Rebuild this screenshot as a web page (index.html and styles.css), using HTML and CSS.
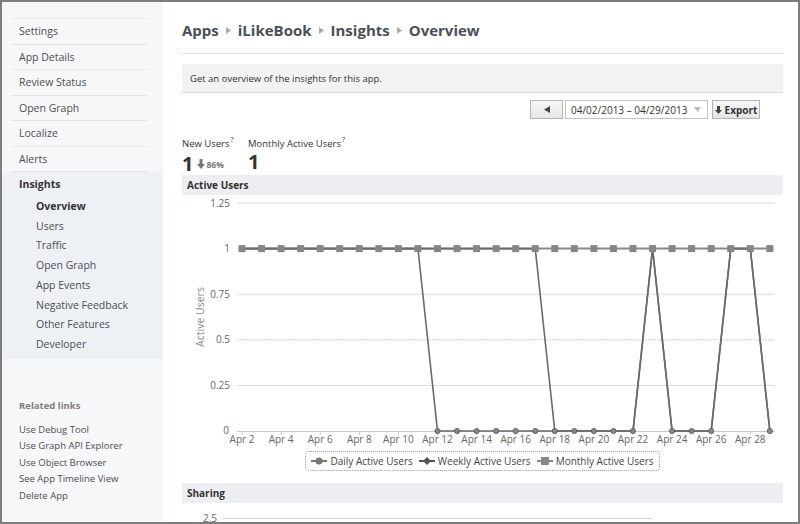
FILE: index.html
```html
<!DOCTYPE html>
<html>
<head>
<meta charset="utf-8">
<link rel="stylesheet" href="styles.css">
</head>
<body>
<div class="frame">
  <aside class="sidebar">
    <ul class="nav">
      <li>Settings</li>
      <li>App Details</li>
      <li>Review Status</li>
      <li>Open Graph</li>
      <li>Localize</li>
      <li>Alerts</li>
    </ul>
    <div class="insights">
      <div class="ins-title">Insights</div>
      <ul class="sub">
        <li class="active">Overview</li>
        <li>Users</li>
        <li>Traffic</li>
        <li>Open Graph</li>
        <li>App Events</li>
        <li>Negative Feedback</li>
        <li>Other Features</li>
        <li>Developer</li>
      </ul>
    </div>
    <div class="related">
      <div class="rel-title">Related links</div>
      <ul class="rel-list">
        <li>Use Debug Tool</li>
        <li>Use Graph API Explorer</li>
        <li>Use Object Browser</li>
        <li>See App Timeline View</li>
        <li>Delete App</li>
      </ul>
    </div>
  </aside>
  <main class="main">
    <h1 class="crumbs">Apps<svg class="sep" width="5" height="7" viewBox="0 0 5 7"><path d="M0 0 L5 3.5 L0 7Z"/></svg>iLikeBook<svg class="sep" width="5" height="7" viewBox="0 0 5 7"><path d="M0 0 L5 3.5 L0 7Z"/></svg>Insights<svg class="sep" width="5" height="7" viewBox="0 0 5 7"><path d="M0 0 L5 3.5 L0 7Z"/></svg>Overview</h1>
    <div class="desc">Get an overview of the insights for this app.</div>
    <div class="controls">
      <div class="btn prev"><svg width="6" height="7" viewBox="0 0 6 7"><path d="M6 0 L0 3.5 L6 7Z"/></svg></div>
      <div class="select"><span>04/02/2013 – 04/29/2013</span><svg class="caret" width="7" height="5" viewBox="0 0 7 5"><path d="M0 0 L7 0 L3.5 5Z"/></svg></div>
      <div class="btn export"><svg width="7" height="8" viewBox="0 0 7 8"><path d="M2 0 H5 V4 H7 L3.5 8 L0 4 H2Z"/></svg>Export</div>
    </div>
    <div class="stats">
      <div class="stat s1">
        <div class="stat-label">New Users<sup>?</sup></div>
        <div class="stat-val">1<svg class="down" width="8" height="10" viewBox="0 0 8 10"><path d="M2.5 0 H5.5 V5 H8 L4 10 L0 5 H2.5Z"/></svg><span class="pct">86%</span></div>
      </div>
      <div class="stat">
        <div class="stat-label">Monthly Active Users<sup>?</sup></div>
        <div class="stat-val">1</div>
      </div>
    </div>
    <div class="bar">Active Users</div>
    <svg class="chart" width="601" height="252" viewBox="0 0 601 252">
      <g class="grid">
        <line x1="55" y1="8" x2="593" y2="8"/>
        <line x1="55" y1="53.6" x2="593" y2="53.6"/>
        <line class="dash" x1="55" y1="99.2" x2="593" y2="99.2"/>
        <line class="dash" x1="55" y1="144.8" x2="593" y2="144.8"/>
        <line x1="55" y1="190.4" x2="593" y2="190.4"/>
        <line class="axis" x1="55" y1="236.5" x2="593" y2="236.5"/>
      </g>
      <g class="ylab">
        <text x="48" y="12">1.25</text>
        <text x="48" y="57">1</text>
        <text x="48" y="103">0.75</text>
        <text x="48" y="148">0.5</text>
        <text x="48" y="194">0.25</text>
        <text x="47" y="239">0</text>
      </g>
      <text class="ytitle" transform="translate(22 122) rotate(-90)">Active Users</text>
      <g class="xlab" id="xlab"></g>
      <g id="series"></g>
    </svg>
    <div class="legend-wrap">
      <div class="legend">
        <span class="li"><svg width="16" height="10" viewBox="0 0 16 10"><line x1="0" y1="5" x2="16" y2="5" stroke="#777" stroke-width="2"/><circle cx="8" cy="5" r="3.5" fill="#777"/></svg>Daily Active Users</span>
        <span class="li"><svg width="16" height="10" viewBox="0 0 16 10"><line x1="0" y1="5" x2="16" y2="5" stroke="#555" stroke-width="2"/><path d="M8 1 L12 5 L8 9 L4 5Z" fill="#555"/></svg>Weekly Active Users</span>
        <span class="li"><svg width="16" height="10" viewBox="0 0 16 10"><line x1="0" y1="5" x2="16" y2="5" stroke="#888" stroke-width="2"/><rect x="4" y="1" width="8" height="8" fill="#888"/></svg>Monthly Active Users</span>
      </div>
    </div>
    <div class="bar">Sharing</div>
    <div class="share-axis"><span>2.5</span><i class="share-line"></i></div>
  </main>
</div>
<script src="chart.js"></script>
</body>
</html>
```

FILE: chart.js
```js
(function () {
  var NS = 'http://www.w3.org/2000/svg';
  var X = function (i) { return 60 + 19.55 * i; };
  var Y = function (v) { return 236 - v * 182.4; };
  var xl = document.getElementById('xlab');
  for (var d = 2; d <= 28; d += 2) {
    var t = document.createElementNS(NS, 'text');
    t.setAttribute('x', X(d - 2));
    t.setAttribute('y', 248);
    t.textContent = 'Apr ' + d;
    xl.appendChild(t);
    var tk = document.createElementNS(NS, 'line');
    tk.setAttribute('x1', X(d - 2)); tk.setAttribute('x2', X(d - 2));
    tk.setAttribute('y1', 237); tk.setAttribute('y2', 240);
    tk.setAttribute('class', 'tick');
    xl.appendChild(tk);
  }
  function vals(spec) {
    var a = [];
    for (var i = 0; i < 28; i++) a.push(spec(i));
    return a;
  }
  var daily = vals(function (i) {
    if (i <= 9) return 1;
    if (i <= 20) return 0;
    if (i === 21) return 1;
    if (i <= 24) return 0;
    if (i <= 26) return 1;
    return 0;
  });
  var weekly = vals(function (i) {
    if (i <= 15) return 1;
    if (i <= 20) return 0;
    if (i === 21) return 1;
    if (i <= 24) return 0;
    if (i <= 26) return 1;
    return 0;
  });
  var monthly = vals(function () { return 1; });
  var g = document.getElementById('series');
  function line(data, cls) {
    var p = document.createElementNS(NS, 'polyline');
    p.setAttribute('points', data.map(function (v, i) { return X(i) + ',' + Y(v); }).join(' '));
    p.setAttribute('class', cls);
    g.appendChild(p);
  }
  line(monthly, 'ln-m');
  line(daily, 'ln-d');
  line(weekly, 'ln-w');
  daily.forEach(function (v, i) {
    if (v === 0) {
      var c = document.createElementNS(NS, 'circle');
      c.setAttribute('cx', X(i)); c.setAttribute('cy', Y(v)); c.setAttribute('r', 2.6);
      c.setAttribute('class', 'mk-d');
      g.appendChild(c);
    }
  });
  monthly.forEach(function (v, i) {
    var r = document.createElementNS(NS, 'rect');
    r.setAttribute('x', X(i) - 3.5); r.setAttribute('y', Y(v) - 3.5);
    r.setAttribute('width', 7); r.setAttribute('height', 7);
    r.setAttribute('class', 'mk-m');
    g.appendChild(r);
  });
})();
```

FILE: styles.css
```css
body {
  margin: 0;
  font-family: "Open Sans", "DejaVu Sans", sans-serif;
  background: #fff;
}
.frame {
  width: 800px;
  height: 524px;
  box-sizing: border-box;
  border: 2px solid #7d7d7d;
  display: flex;
  overflow: hidden;
  background: #fff;
}
.sidebar {
  width: 161px;
  flex: none;
  background: #f6f7f9;
  padding-top: 16px;
  box-sizing: border-box;
}
.nav {
  list-style: none;
  margin: 0 16px 0 9px;
  padding: 0;
  border-bottom: 1px solid #e4e5e9;
}
.nav li {
  height: 25.5px;
  box-sizing: border-box;
  border-top: 1px solid #e4e5e9;
  padding-left: 8px;
  line-height: 24.5px;
  font-size: 10.5px;
  color: #4b4f56;
}
.insights {
  background: #edf0f5;
  padding: 1px 0 4px;
}
.ins-title {
  padding-left: 17px;
  font-size: 10.5px;
  font-weight: bold;
  color: #333;
  line-height: 22px;
  margin-bottom: 2px;
}
.sub {
  list-style: none;
  margin: 0;
  padding: 0 0 0 34px;
}
.sub li {
  font-size: 10.5px;
  line-height: 19.7px;
  color: #4b4f56;
}
.sub li.active {
  font-weight: bold;
  color: #333;
}
.related {
  padding: 39px 0 0 17px;
}
.rel-title {
  font-size: 9.5px;
  font-weight: bold;
  color: #7f7f7f;
  line-height: 16px;
  margin-bottom: 8px;
}
.rel-list {
  list-style: none;
  margin: 0;
  padding: 0;
}
.rel-list li {
  font-size: 9.5px;
  line-height: 16.5px;
  color: #4b4f56;
}
.main {
  flex: 1;
  min-width: 0;
  padding: 18px 15px 0 19px;
}
.crumbs {
  margin: 0;
  font-size: 15px;
  font-weight: bold;
  color: #4b4f56;
  line-height: 20px;
  padding-bottom: 13px;
  border-bottom: 1px dotted #c8c8c8;
}
.sep {
  fill: #aaa;
  margin: 0 7px;
  vertical-align: 2px;
}
.desc {
  margin-top: 10px;
  height: 29px;
  box-sizing: border-box;
  background: #f2f2f2;
  border-bottom: 1px dotted #c9c9c9;
  padding-left: 8px;
  padding-top: 2px;
  font-size: 9.5px;
  line-height: 26px;
  color: #333;
}
.controls {
  display: flex;
  justify-content: flex-end;
  margin-top: 7px;
  padding-right: 23px;
  height: 19px;
}
.btn {
  height: 19px;
  box-sizing: border-box;
  border: 1px solid #b4b4b4;
  background: linear-gradient(#f7f7f7, #e6e6e6);
  display: flex;
  align-items: center;
  justify-content: center;
}
.prev {
  width: 33px;
}
.prev svg {
  fill: #444;
}
.select {
  width: 143px;
  height: 19px;
  box-sizing: border-box;
  margin-left: 2px;
  border: 1px solid #c4c4c4;
  background: #fff;
  display: flex;
  align-items: center;
  justify-content: space-between;
  padding: 0 6px 0 5px;
  font-size: 10px;
  color: #333;
}
.caret {
  fill: #bbb;
}
.export {
  margin-left: 4px;
  width: 48px;
  font-size: 10px;
  font-weight: bold;
  color: #333;
  gap: 3px;
}
.export svg {
  fill: #444;
}
.stats {
  display: flex;
  margin-top: 18px;
}
.stat.s1 {
  width: 66px;
}
.stat-label {
  font-size: 9.5px;
  color: #333;
  line-height: 14px;
}
.stat-label sup {
  font-size: 7px;
  line-height: 0;
  vertical-align: 5px;
  margin-left: 1px;
}
.stat-val {
  font-size: 20px;
  font-weight: bold;
  color: #333;
  line-height: 22px;
  display: flex;
  align-items: center;
}
.down {
  fill: #777;
  margin-left: 4px;
}
.pct {
  font-size: 8.5px;
  font-weight: bold;
  color: #777;
  margin-left: 1px;
  margin-top: 3px;
}
.stats + .bar {
  margin-top: -1px;
}
.bar {
  height: 20px;
  background: #edeef1;
  font-size: 10px;
  font-weight: bold;
  color: #333;
  line-height: 20px;
  padding-left: 5px;
}
.chart {
  display: block;
  font-family: "Open Sans", "DejaVu Sans", sans-serif;
}
.grid line {
  stroke: #dcdcdc;
  stroke-width: 1;
}
.grid line.dash {
  stroke: #cfcfcf;
  stroke-dasharray: 2 1;
}
.grid line.axis {
  stroke: #c8c8c8;
}
.tick {
  stroke: #c8c8c8;
}
.ylab text {
  font-size: 10px;
  fill: #666;
  text-anchor: end;
}
.xlab text {
  font-size: 10px;
  fill: #666;
  text-anchor: middle;
}
.ytitle {
  font-size: 10.5px;
  fill: #888;
  text-anchor: middle;
}
.ln-m {
  fill: none;
  stroke: #8a8a8a;
  stroke-width: 2;
}
.ln-d, .ln-w {
  fill: none;
  stroke: #6a6a6a;
  stroke-width: 1.6;
}
.mk-d {
  fill: #888;
  stroke: #555;
  stroke-width: 0.8;
}
.mk-m {
  fill: #868686;
}
.legend-wrap {
  display: flex;
  justify-content: center;
  margin-top: 4px;
}
.legend {
  display: flex;
  gap: 6px;
  height: 20px;
  box-sizing: border-box;
  border: 1px dotted #9a9a9a;
  border-radius: 4px;
  padding: 0 5px;
  align-items: center;
  font-size: 10px;
  color: #444;
}
.li {
  display: flex;
  align-items: center;
  gap: 3px;
}
.legend-wrap + .bar {
  margin-top: 12px;
}
.share-axis {
  display: flex;
  align-items: center;
  height: 30px;
  padding-left: 21px;
  font-size: 10px;
  color: #666;
}
.share-line {
  display: block;
  width: 430px;
  height: 1px;
  background: #cdd0d8;
  margin-left: 6px;
}
```
